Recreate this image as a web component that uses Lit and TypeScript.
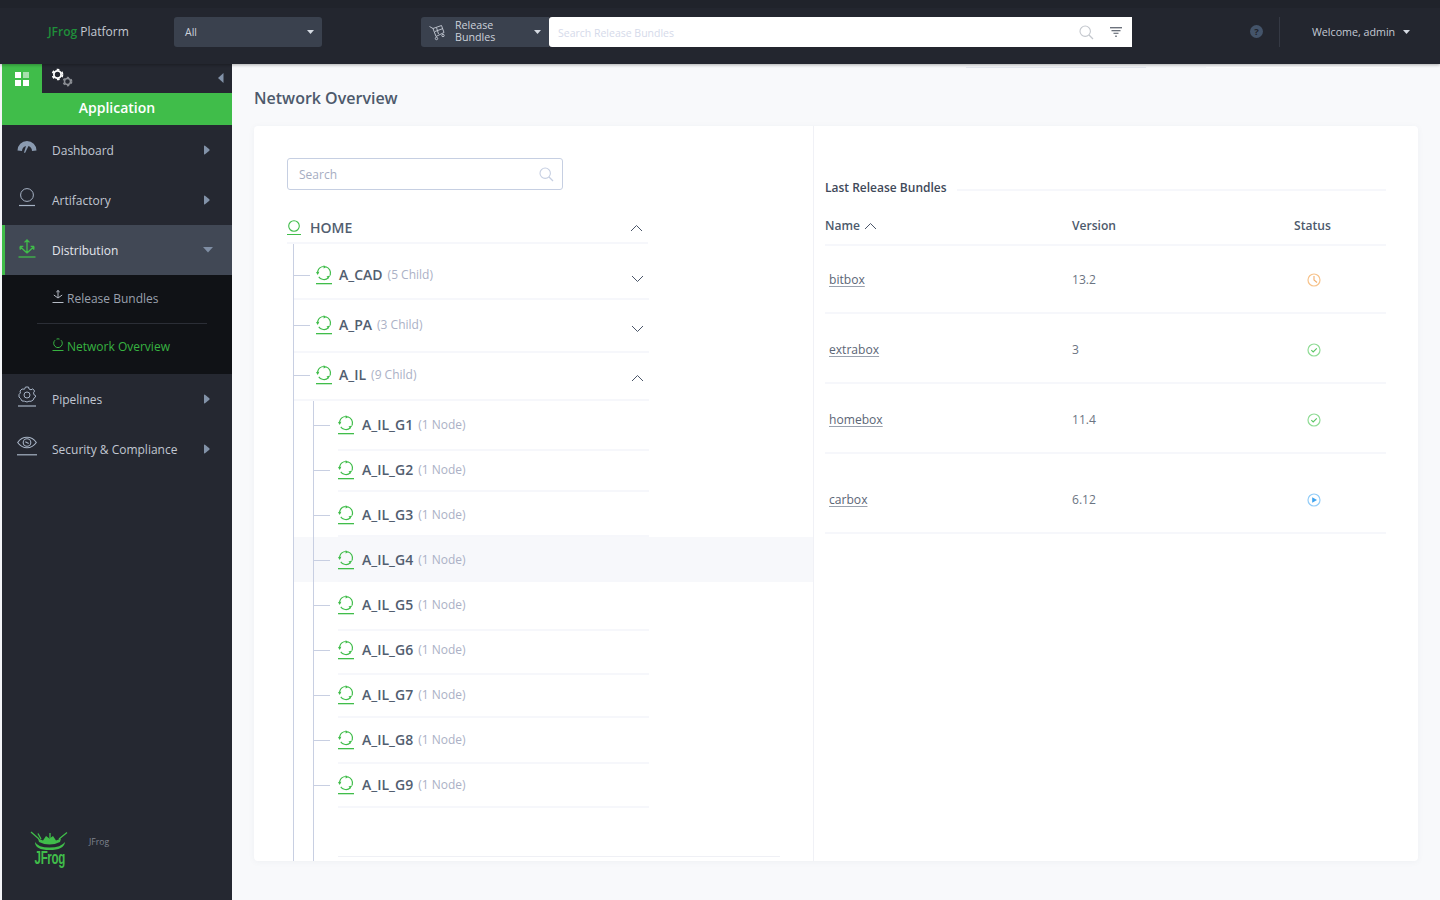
import { LitElement, html, css, svg } from 'lit';
import { customElement } from 'lit/decorators.js';

type TreeRow = { name: string; note: string; height: number; center: number; open?: boolean; hl?: boolean };

const topRows: TreeRow[] = [
  { name: 'A_CAD', note: '(5 Child)', height: 56, center: 31 },
  { name: 'A_PA', note: '(3 Child)', height: 53, center: 25 },
  { name: 'A_IL', note: '(9 Child)', height: 48, center: 22, open: true },
];

const childRows: TreeRow[] = [
  { name: 'A_IL_G1', note: '(1 Node)', height: 50, center: 24 },
  { name: 'A_IL_G2', note: '(1 Node)', height: 41, center: 19 },
  { name: 'A_IL_G3', note: '(1 Node)', height: 45, center: 23 },
  { name: 'A_IL_G4', note: '(1 Node)', height: 45, center: 23, hl: true },
  { name: 'A_IL_G5', note: '(1 Node)', height: 49, center: 23 },
  { name: 'A_IL_G6', note: '(1 Node)', height: 44, center: 19 },
  { name: 'A_IL_G7', note: '(1 Node)', height: 43, center: 20 },
  { name: 'A_IL_G8', note: '(1 Node)', height: 46, center: 22 },
  { name: 'A_IL_G9', note: '(1 Node)', height: 44, center: 21 },
];

const bundles = [
  { name: 'bitbox', version: '13.2', status: 'pending', height: 68, center: 34 },
  { name: 'extrabox', version: '3', status: 'ok', height: 70, center: 36 },
  { name: 'homebox', version: '11.4', status: 'ok', height: 70, center: 36 },
  { name: 'carbox', version: '6.12', status: 'running', height: 80, center: 46 },
];

const nodeIcon = html`<svg class="node-icon" width="17" height="20" viewBox="0 0 17 20" fill="none">
  <circle cx="8" cy="8" r="6.5" stroke="#40bd4a" stroke-width="1.2" stroke-dasharray="10.6 3" transform="rotate(-75 8 8)"/>
  <path d="M7.6 .2L10.6 1.900L7.600 3.500ZM14.600 10.200L12.300 13.400L10.500 11.400ZM0 7L3.400 6.800L1.700 9.900Z" fill="#40bd4a"/>
  <rect x="0" y="18" width="16" height="1.3" fill="#40bd4a"/>
</svg>`;

const chevron = (up: boolean) => html`<svg class="chev" width="13" height="8" viewBox="0 0 13 8" fill="none">
  <path d=${up ? 'M1 7L6.5 1.5L12 7' : 'M1 1L6.5 6.5L12 1'} stroke="#4a5568" stroke-width="1"/>
</svg>`;

const searchIcon = (color: string) => html`<svg width="15" height="15" viewBox="0 0 15 15" fill="none">
  <circle cx="6.2" cy="6.2" r="5.2" stroke=${color} stroke-width="1.1"/><path d="M10 10L14 14" stroke=${color} stroke-width="1.3"/>
</svg>`;

const caret = html`<svg width="7" height="4" viewBox="0 0 7 4"><path d="M0 0H7L3.500 4Z" fill="#d5dae2"/></svg>`;
const navArrow = html`<svg width="7" height="10" viewBox="0 0 7 10"><path d="M1 1Q1 .2 2 .7L6.300 4.300Q7 5 6.300 5.700L2 9.300Q1 9.800 1 9Z" fill="#8292a8"/></svg>`;

const gear = (cx: number, cy: number, r: number, color: string, w: number) => svg`
  <circle cx=${cx} cy=${cy} r=${r} fill="none" stroke=${color} stroke-width=${w}/>
  <circle cx=${cx} cy=${cy} r=${r + w * 0.8} fill="none" stroke=${color} stroke-width=${w * 0.9} stroke-dasharray=${`${r * 0.75} ${r * 0.8}`}/>`;

const navIcons: Record<string, unknown> = {
  dashboard: html`<svg width="20" height="14" viewBox="0 0 20 14"><path d="M0.5 10.5A9.5 9.5 0 0 1 19.5 10.5L15 11A5.5 5.5 0 0 0 11.5 6L8 13L7 12.5L9 6A5.5 5.5 0 0 0 5 11Z" fill="#8a9ab0"/></svg>`,
  artifactory: html`<svg width="18" height="19" viewBox="0 0 18 19" fill="none"><circle cx="9" cy="7" r="6.4" stroke="#a7b3c5" stroke-width="1"/><path d="M1 17.5H17" stroke="#a7b3c5" stroke-width="1.2"/></svg>`,
  distribution: html`<svg width="18" height="19" viewBox="0 0 18 19" fill="none" stroke="#40bd4a" stroke-width="1.3"><path d="M9 1V14M6.500 3.400L9 1L11.500 3.400M9 14L2 7.500M9 14L16 7.500M2 7.500L2.300 10.800M2 7.500L5.300 7.400M16 7.500L15.700 10.800M16 7.500L12.700 7.400"/><path d="M.5 18H17.5"/></svg>`,
  pipelines: html`<svg width="18" height="21" viewBox="0 0 18 21" fill="none" stroke="#a7b3c5"><path d="M7.5 1H10.5L11 3L13 3.8L14.8 2.8L16.6 5L15.5 6.8L16 8.8L17.5 9.5V11L16 12L15.2 14L13 15.3L11 15.2L9 16L6.5 15.2L4 15L2.5 12.5L1 11V8.5L2.4 7L2 5L4 3L6.5 3.2Z" stroke-width="1"/><circle cx="9" cy="9" r="3" stroke-width="1"/><path d="M0 20H18" stroke-width="1.2"/></svg>`,
  security: html`<svg width="20" height="20" viewBox="0 0 20 20" fill="none" stroke="#a7b3c5" stroke-width="1.100"><path d="M.7 6.500C5.500 -.5 14.500 -.5 19.300 6.500C14.500 13.500 5.500 13.500 .7 6.500Z"/><circle cx="10" cy="6.500" r="3.800"/><path d="M8.300 5.800L11.700 7.400"/><path d="M0 18.800H20" stroke-width="1.200"/></svg>`,
};

const statusIcons: Record<string, unknown> = {
  pending: html`<svg width="14" height="14" viewBox="0 0 14 14" fill="none"><circle cx="7" cy="7" r="6" stroke="#f7c38b" stroke-width="1.2"/><path d="M7 3V7L10 9.5" stroke="#f0b070" stroke-width="1.1"/></svg>`,
  ok: html`<svg width="14" height="14" viewBox="0 0 14 14" fill="none"><circle cx="7" cy="7" r="6" stroke="#8fdc95" stroke-width="1.2"/><path d="M4.3 7.2L6.2 9L9.8 5.4" stroke="#58c462" stroke-width="1.1"/></svg>`,
  running: html`<svg width="14" height="14" viewBox="0 0 14 14" fill="none"><circle cx="7" cy="7" r="6" stroke="#93cdf8" stroke-width="1.2"/><path d="M5.2 4.2L10 7L5.2 9.8Z" fill="#3fa3ee"/></svg>`,
};

@customElement('app-root')
export class AppRoot extends LitElement {
  static styles = css`
    :host {
      display: block;
      width: 1440px;
      height: 900px;
      overflow: hidden;
      font-family: 'Open Sans', 'Noto Sans', sans-serif;
      background: #f8f9fb;
      color: #4a5568;
    }

    .page {
      display: flex;
      flex-direction: column;
      height: 100%;
      padding-left: 2px;
      box-sizing: border-box;
      background: #f4f5f8;
    }

    /* top bar */
    .topbar {
      height: 64px;
      flex: none;
      margin-left: -2px;
      box-sizing: border-box;
      background: #23262f;
      border-top: 8px solid #20232b;
      display: flex;
      align-items: flex-start;
      padding-top: 9px;
      position: relative;
      z-index: 3;
      box-shadow: 0 1px 3px rgba(0, 0, 0, 0.3);
    }
    .brand {
      width: 174px;
      box-sizing: border-box;
      padding-left: 48px;
      line-height: 30px;
      font-size: 12px;
      color: #c4c9d2;
      flex: none;
    }
    .brand b { color: #1f8f3a; font-weight: 600; }
    .select {
      background: #3a414e;
      border-radius: 3px;
      height: 30px;
      box-sizing: border-box;
      display: flex;
      align-items: center;
      color: #ccd1da;
      font-size: 10.5px;
      flex: none;
    }
    .select.all { width: 148px; padding: 0 8px 0 11px; justify-content: space-between; margin-right: 99px; }
    .select.bundles {
      width: 128px;
      padding: 0 8px 0 8px;
      border-radius: 3px 0 0 3px;
      line-height: 12.5px;
      font-size: 10.7px;
    }
    .bundles .label { margin: -2px 0 0 8px; flex: 1; }
    .global-search {
      width: 583px;
      height: 30px;
      flex: none;
      background: #fff;
      border-radius: 3px 0 0 3px;
      display: flex;
      align-items: center;
      padding: 0 10px 0 9px;
      box-sizing: border-box;
      font-size: 10.5px;
      color: #d5daea;
    }
    .global-search .text { flex: 1; padding-top: 1px; }
    .global-search svg + svg { margin-left: 16px; }
    .help {
      margin-left: 118px;
      width: 13px;
      height: 13px;
      margin-top: 8px;
      border-radius: 50%;
      background: #44546a;
      color: #20232b;
      font-size: 9.5px;
      font-weight: 700;
      line-height: 13px;
      text-align: center;
      flex: none;
    }
    .vsep { width: 1px; height: 30px; background: #353944; margin-left: 16px; flex: none; }
    .welcome {
      margin-left: 32px;
      line-height: 30px;
      font-size: 10.7px;
      color: #c3c9d4;
      display: flex;
      align-items: center;
      gap: 8px;
    }

    .body { flex: 1; display: flex; min-height: 0; }

    /* sidebar */
    .sidebar {
      width: 230px;
      flex: none;
      background: #252831;
      display: flex;
      flex-direction: column;
    }
    .tabs { height: 29px; display: flex; flex: none; align-items: flex-start; position: relative; }
    .tab-app {
      width: 40px;
      height: 29px;
      background: #40bd4a;
      display: flex;
      align-items: center;
      justify-content: center;
    }
    .tab-admin { margin: 4px 0 0 9px; }
    .collapse { margin: 9px 8px 0 auto; }
    .app-title {
      height: 32px;
      flex: none;
      background: #40bd4a;
      color: #fff;
      font-size: 14px;
      font-weight: 600;
      line-height: 30px;
      text-align: center;
    }
    .nav-item {
      height: 50px;
      flex: none;
      display: flex;
      align-items: center;
      box-sizing: border-box;
      color: #c1c7d2;
      font-size: 12px;
    }
    .nav-icon {
      width: 50px;
      flex: none;
      display: flex;
      justify-content: center;
      margin-top: -6px;
    }
    .nav-item .label { flex: 1; }
    .nav-item .arrow { width: 29px; flex: none; display: flex; }
    .nav-item.active { background: #414855; border-left: 3px solid #40bd4a; color: #e3e6ec; }
    .nav-item.active .nav-icon { width: 44px; margin: -3px 3px 0 0; }
    .sub {
      height: 99px;
      flex: none;
      background: #101216;
      display: flex;
      flex-direction: column;
      font-size: 12px;
      color: #9aa0ad;
    }
    .sub-item { display: flex; align-items: flex-start; margin-left: 50px; height: 48px; padding-top: 15px; box-sizing: border-box; gap: 3px; line-height: 18px; }
    .sub-item.current { color: #37b241; height: 50px; padding-top: 14px; }
    .sub hr { margin: 0 25px 0 35px; border: 0; border-top: 1px solid #2b2e36; flex: none; }
    .foot {
      margin-top: auto;
      display: flex;
      align-items: flex-start;
      padding: 0 0 34px 27px;
      font-size: 8.6px;
      color: #7f848e;
    }
    .logo { width: 40px; display: flex; flex-direction: column; align-items: center; }
    .logo-word {
      color: #40bd4a;
      font-family: 'Liberation Sans', sans-serif;
      font-weight: 700;
      font-size: 18px;
      line-height: 16px;
      margin: -1px 0 0 2px;
      transform: scaleX(0.64);
      letter-spacing: -0.5px;
    }
    .foot-name { margin: 5px 0 0 20px; line-height: 12px; }

    /* main */
    .main {
      flex: 1;
      min-width: 0;
      background: #f8f9fb;
      display: flex;
      flex-direction: column;
      padding: 0 22px 39px 22px;
    }
    .ghost { display: flex; flex: none; height: 4px; padding-left: 712px; box-sizing: border-box; align-items: flex-end; }
    .ghost i { height: 1px; flex: none; background: #e6e9f0; width: 180px; }
    .ghost i + i { background: #fff; width: 194px; margin-left: 60px; }
    h1 {
      margin: 0;
      height: 58px;
      flex: none;
      box-sizing: border-box;
      padding-top: 18px;
      font-size: 16px;
      line-height: 24px;
      font-weight: 600;
      color: #4d5a6c;
    }
    .card {
      flex: 1;
      min-height: 0;
      display: flex;
      background: #fff;
      border-radius: 4px;
      overflow: hidden;
      box-shadow: 0 1px 6px rgba(60, 70, 100, 0.05);
    }

    /* tree */
    .tree-pane {
      width: 560px;
      flex: none;
      box-sizing: border-box;
      border-right: 1px solid #f0f1f6;
      padding: 32px 0 0 33px;
      display: flex;
      flex-direction: column;
      isolation: isolate;
    }
    .search {
      width: 276px;
      height: 32px;
      flex: none;
      box-sizing: border-box;
      border: 1px solid #c6cfe2;
      border-radius: 3px;
      display: flex;
      align-items: center;
      justify-content: space-between;
      padding: 0 8px 0 11px;
      font-size: 12px;
      color: #a6adc2;
    }
    .home {
      margin-top: 22px;
      height: 32px;
      flex: none;
      width: 361px;
      box-sizing: border-box;
      border-bottom: 2px solid #f6f7fb;
      display: flex;
      align-items: flex-start;
      font-size: 14px;
      font-weight: 600;
      line-height: 32px;
      color: #525e70;
    }
    .home svg.home-icon { margin-top: 8px; margin-right: 9px; }
    .home .chev { margin: 12px 5px 0 auto; }
    .guide { flex: 1; display: flex; flex-direction: column; border-left: 1px solid #c8cfe2; min-height: 0; }
    .guide.l1 { margin-left: 6px; }
    .guide.l2 { margin-left: 19px; position: relative; }
    .row { display: flex; align-items: flex-start; box-sizing: border-box; flex: none; position: relative; }
    .row .line { position: absolute; top: 100%; height: 2px; margin-top: -2px; background: #f6f7fb; }
    .l1 > .row { width: 355px; }
    .l1 > .row .line { left: 0; right: 0; }
    .l2 > .row { width: 499px; }
    .l2 > .row .line { left: 24px; width: 311px; }
    .row.hl::before {
      content: '';
      position: absolute;
      z-index: -1;
      top: 0;
      bottom: 0;
      left: -20px;
      right: 0;
      background: #f7f8fb;
    }
    .connector { height: 1px; background: #c8cfe2; flex: none; margin-top: 10px; }
    .l1 .row > .connector { width: 16px; margin-right: 6px; }
    .l2 > .row > .connector { width: 16px; margin-right: 8px; }
    .node-icon { flex: none; }
    .name { font-size: 14px; font-weight: 600; line-height: 20px; margin-left: 7px; color: #525e70; }
    .l1 > .row > .name { margin-left: 6px; }
    .note { font-size: 12px; line-height: 20px; margin-left: 5px; color: #abb1c6; }
    .row .chev { margin: 10px 5px 0 auto; }
    .row.open .chev { margin-top: 9px; }
    .tail { margin: auto 0 4px 24px; width: 442px; height: 1px; background: #eff0f5; flex: none; }

    /* bundles */
    .right { flex: 1; min-width: 0; padding: 53px 32px 0 11px; }
    .section { display: flex; align-items: flex-start; height: 13px; font-size: 12px; font-weight: 600; line-height: 17px; color: #3f4959; }
    .section span { flex: none; }
    .section i { flex: 1; height: 2px; background: #f6f7fb; margin: 10px 0 0 10px; }
    .grid-row { display: grid; grid-template-columns: 247px 222px 1fr; border-bottom: 2px solid #f6f7fb; box-sizing: border-box; }
    .head { height: 54px; padding-top: 24px; align-items: start; font-size: 12.1px; line-height: 20px; color: #4d5a6c; font-weight: 600; }
    .head .sort { display: flex; align-items: center; gap: 4px; }
    .data { font-size: 12.1px; line-height: 20px; color: #6b7482; }
    .data .bundle { padding-left: 4px; color: #5b6575; text-decoration: underline #9aa2af; text-decoration-thickness: 1px; text-underline-offset: 2px; }
    .data .status { padding-left: 13px; display: flex; align-items: center; height: 20px; }
  `;

  private treeRow(row: TreeRow, chev: boolean) {
    return html`<div
      class="row ${row.hl ? 'hl' : ''} ${row.open ? 'open' : ''}"
      style="height:${row.height}px;padding-top:${row.center - 10}px"
    >
      <span class="connector"></span>
      ${nodeIcon}
      <span class="name">${row.name}</span><span class="note">${row.note}</span>
      ${chev ? chevron(!!row.open) : ''}
      <span class="line"></span>
    </div>`;
  }

  private navItem(key: string, label: string, active = false) {
    return html`<div class="nav-item ${active ? 'active' : ''}">
      <span class="nav-icon">${navIcons[key]}</span>
      <span class="label">${label}</span>
      <span class="arrow">${active
        ? html`<svg width="10" height="6" viewBox="0 0 10 6"><path d="M0 0H10L5 5.6Z" fill="#7f8ea4"/></svg>`
        : navArrow}</span>
    </div>`;
  }

  private renderTopbar() {
    return html`<header class="topbar">
      <div class="brand"><b>JFrog</b> Platform</div>
      <div class="select all"><span>All</span>${caret}</div>
      <div class="select bundles">
        <svg width="18" height="18" viewBox="0 0 18 18" fill="none" stroke="#c6ccd6" stroke-width="0.9">
          <path d="M0.5 3.5L4 5.5L7 13.5L15 9.5L12.5 2.5L4 5.5M6 8.5L14 5.5M7.5 4.5L9.5 11"/>
          <circle cx="7.5" cy="15.5" r="1.2"/><circle cx="14" cy="12.5" r="1.2"/>
        </svg>
        <span class="label">Release<br />Bundles</span>
        ${caret}
      </div>
      <div class="global-search">
        <span class="text">Search Release Bundles</span>
        ${searchIcon('#c3c7cd')}
        <svg width="12" height="11" viewBox="0 0 12 11" fill="#6c727c"><rect width="12" height="1.4"/><rect x="1.5" y="3" width="9" height="1.3"/><rect x="3.5" y="5.7" width="5" height="1.2"/><rect x="5" y="8.6" width="2" height="1.2"/></svg>
      </div>
      <div class="help">?</div>
      <div class="vsep"></div>
      <div class="welcome">Welcome, admin ${caret}</div>
    </header>`;
  }

  private renderSidebar() {
    return html`<aside class="sidebar">
      <div class="tabs">
        <div class="tab-app">
          <svg width="14" height="14" viewBox="0 0 14 14"><rect width="6" height="6" fill="#fff"/><rect x="8" width="6" height="6" fill="#a8e0ad"/><rect y="8" width="6" height="6" fill="#fff"/><rect x="8" y="8" width="6" height="6" fill="#fff"/></svg>
        </div>
        <svg class="tab-admin" width="23" height="19" viewBox="0 0 23 19">${gear(6.5, 6.5, 3.6, '#fff', 1.8)}${gear(16.5, 13.5, 3, '#8c8f95', 1.5)}</svg>
        <svg class="collapse" width="6" height="10" viewBox="0 0 6 10"><path d="M5.5 0V10L0 5Z" fill="#8292a8"/></svg>
      </div>
      <div class="app-title">Application</div>
      ${this.navItem('dashboard', 'Dashboard')}
      ${this.navItem('artifactory', 'Artifactory')}
      ${this.navItem('distribution', 'Distribution', true)}
      <div class="sub">
        <div class="sub-item">
          <svg width="12" height="14" viewBox="0 0 12 14" fill="none" stroke="#b5bac4"><path d="M6 .5V8M4.3 2L6 .5L7.7 2M6 8L1.8 5M6 8L10.2 5M.5 12.5H11.5"/></svg>
          <span>Release Bundles</span>
        </div>
        <hr />
        <div class="sub-item current">
          <svg width="12" height="14" viewBox="0 0 12 14" fill="none" stroke="#37b241"><path d="M3 2.2A4.3 4.3 0 1 0 9 2.2M4.5 1.1A4.3 4.3 0 0 1 7.5 1.1M.5 12.5H11.5"/></svg>
          <span>Network Overview</span>
        </div>
      </div>
      ${this.navItem('pipelines', 'Pipelines')}
      ${this.navItem('security', 'Security & Compliance')}
      <div class="foot">
        <div class="logo">
          <svg width="38" height="20" viewBox="0 0 38 20" fill="none">
            <path d="M1 1L9 8M8 2.500L11 8M20 2L20 7M37 1.500L29 8" stroke="#40bd4a" stroke-width="1.300"/>
            <path d="M8 7.500L13 9.500L16 5L19.500 7.500L23 5L26 9.500L31 7.500L30 11Q19.500 16 9 11Z" fill="#40bd4a"/>
            <path d="M5 11Q5 19 19.500 19Q34 19 35 11Q31 16.500 19.500 16.500Q8 16.500 5 11Z" fill="#40bd4a"/>
          </svg>
          <span class="logo-word">JFrog</span>
        </div>
        <span class="foot-name">JFrog</span>
      </div>
    </aside>`;
  }

  private renderTree() {
    return html`<section class="tree-pane">
      <div class="search"><span>Search</span>${searchIcon('#c6cfe2')}</div>
      <div class="home">
        <svg class="home-icon" width="14" height="16" viewBox="0 0 14 16" fill="none"><circle cx="7" cy="6" r="5.300" stroke="#40bd4a" stroke-width="1.100"/><path d="M0 14.500H14" stroke="#40bd4a" stroke-width="1.200"/></svg>
        <span>HOME</span>
        ${chevron(true)}
      </div>
      <div class="guide l1">
        ${topRows.map((r) => this.treeRow(r, true))}
        <div class="guide l2">
          ${childRows.map((r) => this.treeRow(r, false))}
          <div class="tail"></div>
        </div>
      </div>
    </section>`;
  }

  private renderBundles() {
    return html`<section class="right">
      <div class="section"><span>Last Release Bundles</span><i></i></div>
      <div class="grid-row head">
        <span class="sort">Name <svg width="13" height="8" viewBox="0 0 13 8" fill="none"><path d="M1 7L6.500 1.500L12 7" stroke="#4a5568"/></svg></span>
        <span>Version</span>
        <span>Status</span>
      </div>
      ${bundles.map(
        (b) => html`<div class="grid-row data" style="height:${b.height}px;padding-top:${b.center - 10}px">
          <span><span class="bundle">${b.name}</span></span>
          <span>${b.version}</span>
          <span class="status">${statusIcons[b.status]}</span>
        </div>`
      )}
    </section>`;
  }

  render() {
    return html`<div class="page">
      ${this.renderTopbar()}
      <div class="body">
        ${this.renderSidebar()}
        <main class="main">
          <div class="ghost"><i></i><i></i></div>
          <h1>Network Overview</h1>
          <div class="card">${this.renderTree()} ${this.renderBundles()}</div>
        </main>
      </div>
    </div>`;
  }
}

declare global {
  interface HTMLElementTagNameMap {
    'app-root': AppRoot;
  }
}
